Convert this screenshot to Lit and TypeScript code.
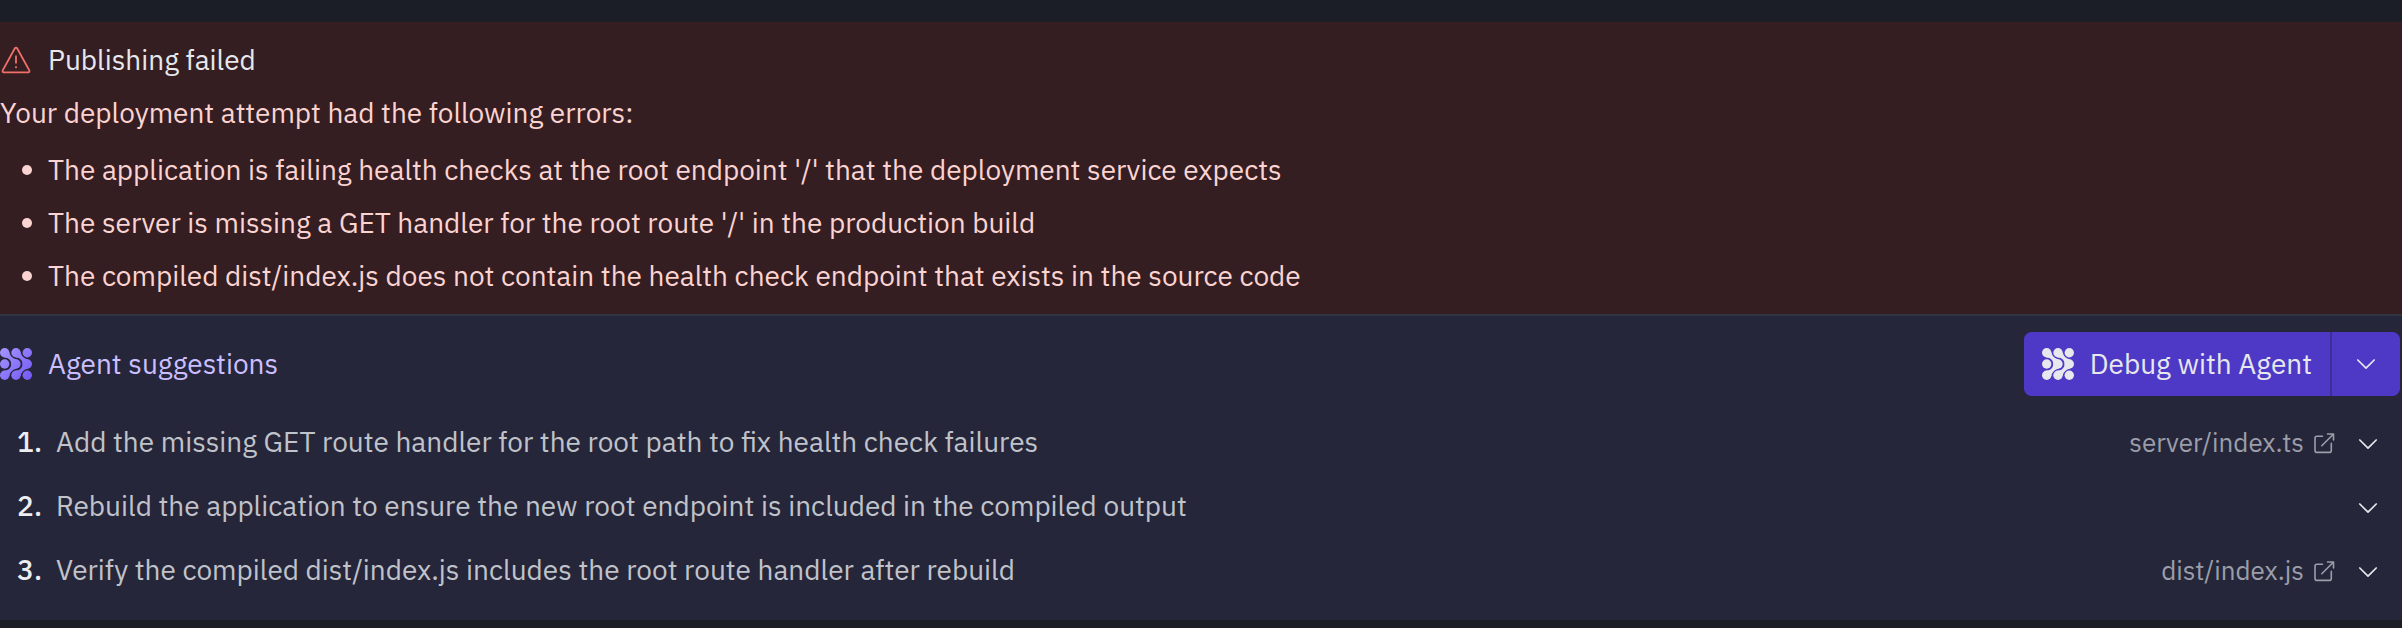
import { LitElement, html, css, svg, nothing } from "lit";
import { customElement, property, state } from "lit/decorators.js";

interface Suggestion {
  text: string;
  file?: string;
}

const chevron = html`<svg viewBox="0 0 32 32" width="32" height="32" fill="none" stroke="currentColor" stroke-width="1.7" stroke-linecap="round" stroke-linejoin="round" aria-hidden="true">
  <path d="M7.800 12l8.200 8.200 8.200-8.200" />
</svg>`;

const external = html`<svg viewBox="0 0 24 24" width="24" height="24" fill="none" stroke="currentColor" stroke-width="1.6" stroke-linecap="round" stroke-linejoin="round" aria-hidden="true">
  <path d="M10.500 4.200H5a2 2 0 0 0-2 2V18.400a2 2 0 0 0 2 2h12.300a2 2 0 0 0 2-2v-7" />
  <path d="M15.500 2H21.500v6M21.500 2L9.800 13.700" />
</svg>`;

const warning = html`<svg viewBox="0 0 32 32" width="32" height="32" fill="none" stroke="currentColor" stroke-width="1.8" stroke-linecap="round" stroke-linejoin="round" aria-hidden="true">
  <path d="M14.900 4.300L2.700 26.400a1.300 1.300 0 0 0 1.100 2h24.400a1.300 1.300 0 0 0 1.100-2L17.100 4.300a1.300 1.300 0 0 0-2.200 0z" />
  <path d="M16 12.200v6.600M16 23v.4" />
</svg>`;

const centres = [4.7, 16, 27.3];

@customElement("agent-mark")
export class AgentMark extends LitElement {
  static styles = css`
    :host {
      display: inline-flex;
      flex: none;
      width: 32px;
      height: 32px;
    }
    .start {
      stop-color: #a596ff;
    }
    .end {
      stop-color: #7457f5;
    }
  `;

  @property({ type: Boolean }) gradient = false;

  render() {
    return html`<svg viewBox="0 0 32 32" width="32" height="32" aria-hidden="true">
      <defs>
        <linearGradient id="g" gradientUnits="userSpaceOnUse" x1="0" y1="0" x2="32" y2="32">
          <stop class="start" offset="0" />
          <stop class="end" offset="1" />
        </linearGradient>
      </defs>
      <g fill=${this.gradient ? "url(#g)" : "currentColor"}>
        ${centres.map((y) => centres.map((x) => svg`<circle cx=${x} cy=${y} r="4.7" />`))}
        <path d="M9.400 4.200C9.900 7.800 13.100 10.800 16.800 11.300L11.300 16.500C11.300 12.200 8.800 9.600 4.200 9.400Z" />
        <path d="M20.700 4.200C21.200 7.800 24.400 10.800 28.100 11.300L22.600 16.500C22.600 12.200 20.100 9.600 15.500 9.400Z" />
        <path d="M9.400 27.800C9.900 24.200 13.100 21.200 16.800 20.700L11.300 15.500C11.300 19.800 8.800 22.400 4.200 22.600Z" />
        <path d="M20.700 27.800C21.200 24.200 24.400 21.200 28.100 20.700L22.600 15.500C22.600 19.800 20.100 22.400 15.500 22.600Z" />
      </g>
    </svg>`;
  }
}

@customElement("app-root")
export class AppRoot extends LitElement {
  static styles = css`
    :host {
      display: block;
      box-sizing: border-box;
      min-height: 100vh;
      padding-top: 22px;
      background: #1b1e26;
      color: #e6e8ed;
      font-family: "IBM Plex Sans", Roboto, sans-serif;
      font-size: 28px;
      line-height: 40px;
    }
    h2,
    p,
    ul,
    ol {
      margin: 0;
      padding: 0;
      font: inherit;
      list-style: none;
    }
    button {
      margin: 0;
      padding: 0;
      border: 0;
      background: none;
      color: inherit;
      font: inherit;
      cursor: pointer;
    }
    svg {
      display: block;
      flex: none;
    }
    .errors {
      display: flex;
      flex-direction: column;
      gap: 13px;
      padding: 18px 0;
      background: #341e21;
      color: #fbd3d1;
      border-bottom: 2px solid #303342;
    }
    .title {
      display: flex;
      align-items: center;
      gap: 16px;
      color: #e6e8ed;
    }
    .warn {
      color: #f2706b;
    }
    .error-list {
      display: flex;
      flex-direction: column;
      gap: 13px;
      padding-top: 4px;
    }
    .error {
      display: flex;
      align-items: center;
      gap: 16px;
      padding-left: 22px;
    }
    .error::before {
      content: "";
      flex: none;
      width: 10px;
      height: 10px;
      border-radius: 50%;
      background: currentColor;
    }
    .agent {
      display: flex;
      flex-direction: column;
      gap: 16px;
      padding: 16px 0;
      background: #26263a;
    }
    .agent-head {
      display: flex;
      align-items: center;
      justify-content: space-between;
      padding-right: 2px;
    }
    .agent-title {
      color: #cbbfff;
    }
    .split {
      display: flex;
      gap: 2px;
      height: 64px;
      border-radius: 8px;
      overflow: hidden;
      background: #3c2f96;
    }
    .split button {
      display: flex;
      align-items: center;
      justify-content: center;
      background: #4e39c6;
    }
    .split .debug {
      gap: 16px;
      padding: 0 18px;
    }
    .split .more {
      width: 68px;
    }
    .row {
      display: flex;
      align-items: center;
      height: 64px;
      padding: 0 18px 0 16px;
    }
    .num,
    .text,
    .path {
      padding-bottom: 4px;
    }
    .num {
      width: 26px;
      margin-right: 14px;
      color: #eceef2;
      font-weight: 500;
      text-align: right;
    }
    .text {
      flex: 1;
      color: #c0c3ca;
    }
    .file {
      display: flex;
      align-items: center;
      gap: 8px;
      margin-right: 16px;
      color: #9b9ea9;
      font-size: 26px;
      text-decoration: none;
    }
  `;

  @state() private expanded = -1;

  private errors = [
    "The application is failing health checks at the root endpoint '/' that the deployment service expects",
    "The server is missing a GET handler for the root route '/' in the production build",
    "The compiled dist/index.js does not contain the health check endpoint that exists in the source code",
  ];

  private suggestions: Suggestion[] = [
    {
      text: "Add the missing GET route handler for the root path to fix health check failures",
      file: "server/index.ts",
    },
    { text: "Rebuild the application to ensure the new root endpoint is included in the compiled output" },
    {
      text: "Verify the compiled dist/index.js includes the root route handler after rebuild",
      file: "dist/index.js",
    },
  ];

  private toggle(i: number) {
    this.expanded = this.expanded === i ? -1 : i;
  }

  render() {
    return html`
      <section class="errors">
        <h2 class="title"><span class="warn">${warning}</span>Publishing failed</h2>
        <p>Your deployment attempt had the following errors:</p>
        <ul class="error-list">
          ${this.errors.map((e) => html`<li class="error">${e}</li>`)}
        </ul>
      </section>
      <section class="agent">
        <div class="agent-head">
          <h2 class="title agent-title"><agent-mark gradient></agent-mark>Agent suggestions</h2>
          <div class="split">
            <button class="debug" type="button"><agent-mark></agent-mark>Debug with Agent</button>
            <button class="more" type="button" aria-label="More options">${chevron}</button>
          </div>
        </div>
        <ol>
          ${this.suggestions.map(
            (s, i) => html`<li class="row">
              <span class="num">${i + 1}.</span>
              <span class="text">${s.text}</span>
              ${s.file
                ? html`<a class="file" href="#${s.file}"><span class="path">${s.file}</span>${external}</a>`
                : nothing}
              <button
                type="button"
                aria-label="Show details"
                aria-expanded=${this.expanded === i ? "true" : "false"}
                @click=${() => this.toggle(i)}
              >
                ${chevron}
              </button>
            </li>`,
          )}
        </ol>
      </section>
    `;
  }
}
